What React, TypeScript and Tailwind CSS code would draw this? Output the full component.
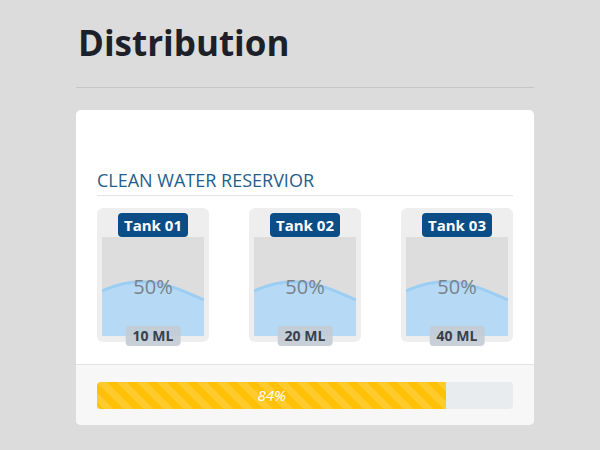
import React from "react";

type Tank = { name: string; level: number; volume: string };

const tanks: Tank[] = [
  { name: "Tank 01", level: 50, volume: "10 ML" },
  { name: "Tank 02", level: 50, volume: "20 ML" },
  { name: "Tank 03", level: 50, volume: "40 ML" },
];

function TankCard({ tank }: { tank: Tank }) {
  return (
    <div className="relative w-[112px] h-[134px] rounded-md bg-[#eeeeee] flex flex-col items-center pt-[5px]">
      <div className="h-[24px] px-[6px] rounded-[4px] bg-[#0b4d87] text-white font-bold text-[15px] leading-[24px]">
        {tank.name}
      </div>
      <div className="relative w-[102px] h-[99px] bg-[#dddddd] overflow-hidden">
        <svg className="absolute inset-0" width="102" height="99" viewBox="0 0 102 99">
          <path
            d="M0,54 C15,47 32,44 47,45 C64,46 84,55 102,63 L102,99 L0,99 Z"
            fill="#b6daf5"
          />
          <path
            d="M0,54 C15,47 32,44 47,45 C64,46 84,55 102,63"
            fill="none"
            stroke="#9ccdf3"
            strokeWidth="3"
          />
        </svg>
        <div className="absolute left-0 right-0 top-[37px] text-center text-[20px] leading-[26px] text-[#7a8189]">
          {tank.level}%
        </div>
      </div>
      <div className="absolute top-[118px] left-1/2 -translate-x-1/2 h-[20px] px-[7px] rounded-[4px] bg-[#c3cbd4]/90 text-[#36414d] font-bold text-[14px] leading-[20px] whitespace-nowrap">
        {tank.volume}
      </div>
    </div>
  );
}

export default function App() {
  const progress = 84;
  return (
    <div
      className="w-[600px] h-[450px] bg-[#dcdcdc] pl-[76px] pr-[66px] overflow-hidden"
      style={{ fontFamily: '"Open Sans", "Noto Sans", Arial, sans-serif' }}
    >
      <h1 className="pt-[21px] pl-[2px] text-[35px] leading-[43px] font-bold text-[#1d1f29]">
        Distribution
      </h1>
      <div className="mt-[23px] h-px bg-[#c6c6c6]" />
      <div className="mt-[22px] h-[315px] bg-white rounded-[5px] flex flex-col overflow-hidden">
        <div className="flex-1 px-[21px]">
          <div className="pt-[58px]">
            <div className="text-[18px] leading-[25px] text-[#1f5e8c] pb-[2px] border-b border-[#e3e3e3]">
              CLEAN WATER RESERVIOR
            </div>
          </div>
          <div className="mt-[12px] flex justify-between">
            {tanks.map((t) => (
              <TankCard key={t.name} tank={t} />
            ))}
          </div>
        </div>
        <div className="h-[61px] border-t border-[#e2e2e2] bg-[#f7f7f7] px-[21px] pt-[17px]">
          <div className="h-[27px] rounded-[4px] bg-[#e9ecef] overflow-hidden flex">
            <div
              className="h-full bg-[#ffc107] bg-[linear-gradient(45deg,rgba(255,255,255,.15)_25%,transparent_25%,transparent_50%,rgba(255,255,255,.15)_50%,rgba(255,255,255,.15)_75%,transparent_75%,transparent)] bg-size-[20px_20px] flex items-center justify-center text-white italic text-[15px]"
              style={{ width: `${progress}%` }}
            >
              {progress}%
            </div>
          </div>
        </div>
      </div>
    </div>
  );
}
